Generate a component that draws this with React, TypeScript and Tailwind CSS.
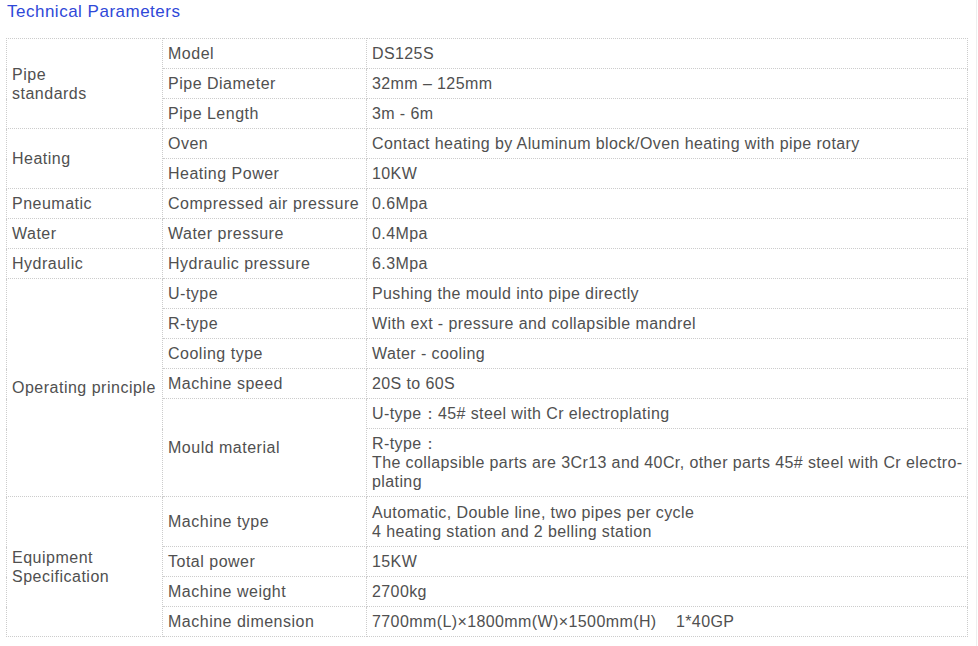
type Row = { group?: { label: string; span: number }; name?: { label: string; span: number }; value: string[]; h: number }

const rows: Row[] = [
  { group: { label: 'Pipe standards', span: 3 }, name: { label: 'Model', span: 1 }, value: ['DS125S'], h: 30 },
  { name: { label: 'Pipe Diameter', span: 1 }, value: ['32mm – 125mm'], h: 30 },
  { name: { label: 'Pipe Length', span: 1 }, value: ['3m - 6m'], h: 30 },
  { group: { label: 'Heating', span: 2 }, name: { label: 'Oven', span: 1 }, value: ['Contact heating by Aluminum block/Oven heating with pipe rotary'], h: 30 },
  { name: { label: 'Heating Power', span: 1 }, value: ['10KW'], h: 30 },
  { group: { label: 'Pneumatic', span: 1 }, name: { label: 'Compressed air pressure', span: 1 }, value: ['0.6Mpa'], h: 30 },
  { group: { label: 'Water', span: 1 }, name: { label: 'Water pressure', span: 1 }, value: ['0.4Mpa'], h: 30 },
  { group: { label: 'Hydraulic', span: 1 }, name: { label: 'Hydraulic pressure', span: 1 }, value: ['6.3Mpa'], h: 30 },
  { group: { label: 'Operating principle', span: 6 }, name: { label: 'U-type', span: 1 }, value: ['Pushing the mould into pipe directly'], h: 30 },
  { name: { label: 'R-type', span: 1 }, value: ['With ext - pressure and collapsible mandrel'], h: 30 },
  { name: { label: 'Cooling type', span: 1 }, value: ['Water - cooling'], h: 30 },
  { name: { label: 'Machine speed', span: 1 }, value: ['20S to 60S'], h: 30 },
  { name: { label: 'Mould material', span: 2 }, value: ['U-type：45# steel with Cr electroplating'], h: 30 },
  {
    value: ['R-type：', 'The collapsible parts are 3Cr13 and 40Cr, other parts 45# steel with Cr electro-', 'plating'],
    h: 68,
  },
  {
    group: { label: 'Equipment Specification', span: 4 },
    name: { label: 'Machine type', span: 1 },
    value: ['Automatic, Double line, two pipes per cycle', '4 heating station and 2 belling station'],
    h: 50,
  },
  { name: { label: 'Total power', span: 1 }, value: ['15KW'], h: 30 },
  { name: { label: 'Machine weight', span: 1 }, value: ['2700kg'], h: 30 },
  { name: { label: 'Machine dimension', span: 1 }, value: ['7700mm(L)×1800mm(W)×1500mm(H)\u00a0\u00a0\u00a0 1*40GP'], h: 30 },
]

const cell = 'border border-dotted border-[#cccccc] px-[5px] py-0 align-middle'

export default function App() {
  return (
    <div className="h-[646px] w-[978px] bg-white font-['Liberation_Sans',Arial,sans-serif] text-[16px] leading-[19px] tracking-[0.5px] text-[#505050]">
      <div className="h-[646px] w-[977px] border-r border-[#eeeeee]">
        <h2 className="px-[7px] pt-[2px] text-[17px] leading-[19px] text-[#2f48d8]">Technical Parameters</h2>
        <table className="ml-[6px] mt-[17px] w-[961px] table-fixed border-collapse">
          <colgroup>
            <col className="w-[156px]" />
            <col className="w-[204px]" />
            <col className="w-[601px]" />
          </colgroup>
          <tbody>
            {rows.map((r, i) => (
              <tr key={i} style={{ height: r.h }}>
                {r.group && (
                  <td rowSpan={r.group.span} className={cell}>
                    {r.group.label === 'Pipe standards' ? (
                      <>Pipe<br />standards</>
                    ) : r.group.label === 'Equipment Specification' ? (
                      <>Equipment<br />Specification</>
                    ) : (
                      r.group.label
                    )}
                  </td>
                )}
                {r.name && (
                  <td rowSpan={r.name.span} className={cell + ' whitespace-nowrap'}>
                    {r.name.label}
                  </td>
                )}
                <td className={cell}>
                  {r.value.map((v, j) => (
                    <div key={j} className="whitespace-nowrap tracking-[0.4px]">
                      {v}
                    </div>
                  ))}
                </td>
              </tr>
            ))}
          </tbody>
        </table>
      </div>
    </div>
  )
}
